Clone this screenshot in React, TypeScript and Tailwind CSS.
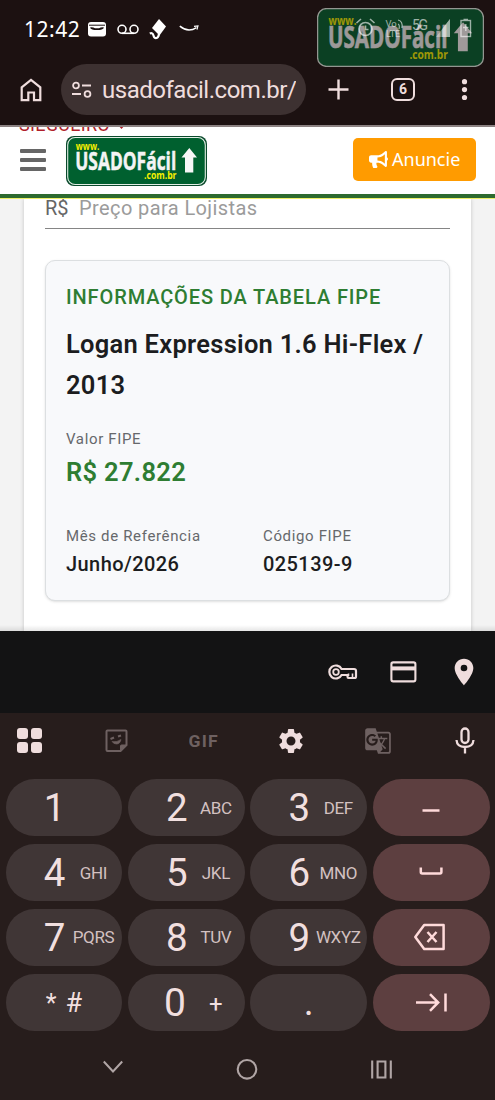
import type { ReactNode } from 'react';
import { FaBullhorn } from 'react-icons/fa';
import { MdSettings, MdLocationOn, MdGTranslate } from 'react-icons/md';

function Logo({ className, flat = false }: { className: string; flat?: boolean }) {
  return (
    <svg viewBox="0 0 141 50" preserveAspectRatio="none" className={className}>
      {!flat && <rect x="0" y="0" width="141" height="50" rx="8" fill="#0a4a2c" />}
      <rect x={flat ? 0.5 : 1.7} y={flat ? 0.5 : 1.5} width={flat ? 140 : 137.6} height={flat ? 49 : 47} rx="7.5" fill="#00602f" stroke="#e3efe6" strokeWidth="1.1" />
      <g fontFamily='"Open Sans", "Noto Sans", sans-serif' fontWeight="700">
        <text x="9.8" y="14" fontSize="11" fill="#f6f000" textLength="23.5" lengthAdjust="spacingAndGlyphs">www.</text>
        <text x="9.2" y="33.9" fontSize="25" fill="#f4f4f4" stroke="#f4f4f4" strokeWidth="0.5" textLength="101" lengthAdjust="spacingAndGlyphs">USADOFácil</text>
        <text x="78" y="43.3" fontSize="11" fill="#f6f000" textLength="32.5" lengthAdjust="spacingAndGlyphs">.com.br</text>
      </g>
      <path d="M123.3 12 131 21.5H127.3V36.6H119V21.5H115.5Z" fill="#f6f6f6" />
    </svg>
  );
}

function StatusBar() {
  return (
    <div className="relative flex h-[60px] items-center pb-[2px] pl-[24px] text-white">
      <span className="w-[62px] font-['Noto_Sans'] text-[21px] leading-[30px] tracking-[0.55px]">12:42</span>
      <svg className="ml-[2px] h-[15px] w-[18px]" viewBox="0 0 18 15">
        <rect width="18" height="14.5" rx="3" fill="#fff" />
        <path d="M1 3.2H17" stroke="#1c1111" strokeWidth="1" />
        <path d="M2 5.4Q5 5 7 6.2H11Q13 5 16 5.4Q15 8 9 8Q3 8 2 5.4Z" fill="#1c1111" />
      </svg>
      <svg className="ml-[10.5px] h-[11px] w-[22px]" viewBox="0 0 22 11" fill="none" stroke="#fff" strokeWidth="1.6">
        <circle cx="5" cy="5.3" r="4" />
        <circle cx="17" cy="5.3" r="4" />
        <path d="M5 9.3H17" />
      </svg>
      <svg className="ml-[10px] h-[21px] w-[18px]" viewBox="0 0 18 21">
        <path d="M10 0 17 7.5 10.5 16.5 3 9Z" fill="#fff" />
        <path d="M.8 14.6Q3.6 13.2 4.5 16.5Q5.2 19.6 7.6 19Q9.4 18.5 10 15" stroke="#fff" strokeWidth="2.2" fill="none" />
      </svg>
      <svg className="ml-[12px] h-[8px] w-[21px]" viewBox="0 0 21 8" fill="none" stroke="#fff">
        <path d="M.8 1.2Q9 8 17.5 2.6" strokeWidth="1.5" />
        <path d="M15 1.4 19 .9 18 4.6" strokeWidth="1.1" />
      </svg>
      <Logo flat className="absolute left-[317px] top-[8px] h-[59px] w-[167px] opacity-60" />
      <svg className="absolute left-[355px] top-[17px] h-[22px] w-[120px] opacity-60" viewBox="0 0 120 22" fill="none" stroke="#fff">
        <circle cx="10.5" cy="12" r="6.5" strokeWidth="1.7" />
        <path d="M10.5 8.5V12.5H13.5M1.5 6 6 2M15 2 19.5 6" strokeWidth="1.6" />
        <g fill="#fff" stroke="none" fontFamily="Roboto, sans-serif">
          <text x="30.5" y="10" fontSize="9.5">Vo</text>
          <text x="31" y="19.5" fontSize="9">LTE</text>
          <text x="57" y="12.5" fontSize="14" textLength="16">5G</text>
        </g>
        <path d="M43 3Q48 4 47 11M43 7Q45 8 44 12" strokeWidth="1.2" />
        <path d="M81 20 95 2V20Z" fill="#fff" stroke="none" opacity=".6" />
        <path d="M87 20V12.5L95 2V20Z" fill="#fff" stroke="none" />
        <rect x="106" y="3.5" width="9.5" height="16" strokeWidth="1.4" />
        <path d="M108.5 2.5H113M110.8 7V14M108 10.5H113.5" strokeWidth="1.4" />
      </svg>
    </div>
  );
}

function BrowserBar() {
  return (
    <div className="flex h-[65px] items-start pl-[20px] pt-[4px] text-[#efdddd]">
      <svg className="mt-[14px] h-[24px] w-[22px]" viewBox="0 0 22 24" fill="none" stroke="currentColor" strokeWidth="2.2">
        <path d="M1.7 9.3 11 1.8 20.3 9.3V22.2H14V14.5H8.3V22.2H1.7Z" />
      </svg>
      <div className="ml-[19px] flex h-[51px] w-[245px] items-center overflow-hidden rounded-full bg-[#3d3131] pl-[11px]">
        <svg className="h-[18px] w-[20px] shrink-0" viewBox="0 0 20 18" fill="none" stroke="currentColor" strokeWidth="1.8">
          <circle cx="4" cy="4.5" r="2.9" />
          <path d="M10 4.5H19M0 13H9" />
          <circle cx="15.5" cy="13" r="2.9" />
        </svg>
        <div className="ml-[10px] w-[194px] overflow-hidden whitespace-nowrap font-['Roboto'] text-[24px] leading-[36px] tracking-[-0.48px]">usadofacil.com.br/v</div>
      </div>
      <svg className="ml-[22px] mt-[15px] h-[21px] w-[21px]" viewBox="0 0 21 21" stroke="currentColor" strokeWidth="2.4">
        <path d="M10.5 .5V20.5M.5 10.5H20.5" />
      </svg>
      <div className="ml-[42px] mt-[14px] flex h-[23px] w-[24px] items-center justify-center rounded-[6px] border-[2px] border-current font-['Roboto'] text-[14px] font-bold">6</div>
      <svg className="ml-[38px] mt-[15px] h-[22px] w-[30px]" viewBox="0 0 30 22" fill="currentColor">
        <circle cx="11.5" cy="2.7" r="2.6" />
        <circle cx="11.5" cy="10.6" r="2.6" />
        <circle cx="11.5" cy="18.5" r="2.6" />
      </svg>
    </div>
  );
}

function SiteHeader() {
  return (
    <header className="relative flex h-[74px] items-start overflow-hidden border-t-2 border-[#8c8282] bg-white">
      <div className="absolute left-[19px] top-[-12px] flex items-center gap-[7px] font-['Roboto'] text-[18px] leading-[20px] tracking-[0.3px] text-[#b01f2b]">
        SIEGUEIRO
        <svg className="mt-[3px] h-[7px] w-[9px]" viewBox="0 0 9 7"><path d="M0 1H9L4.5 6Z" fill="currentColor" /></svg>
      </div>
      <div className="flex h-[67px] w-full">
        <div className="ml-[20px] mt-[22px] flex h-[22px] w-[26px] flex-col justify-between">
          <i className="h-[4px] rounded-[1px] bg-[#666]" />
          <i className="h-[4px] rounded-[1px] bg-[#666]" />
          <i className="h-[4px] rounded-[1px] bg-[#666]" />
        </div>
        <Logo className="ml-[20px] mt-[9px] h-[50px] w-[141px]" />
        <button className="ml-auto mr-[19px] mt-[11px] flex h-[43px] w-[123px] items-center rounded-[5px] bg-[#ff9b00] pl-[16px] font-['Noto_Sans'] text-[18px] text-white">
          <FaBullhorn className="mr-[4px] h-[17px] w-[19px]" />
          Anuncie
        </button>
      </div>
      <div className="absolute bottom-0 left-0 h-[5px] w-full border-b border-[#eef06a] bg-[#2d6a2f]" />
    </header>
  );
}

function FipeCard() {
  return (
    <section className="h-[341px] w-[405px] rounded-[10px] border border-[#dcdfe1] bg-[#f8f9fb] pl-[20px] pt-[21px] font-['Roboto'] text-[#1c1d1f] shadow-sm">
      <h2 className="text-[20px] font-medium leading-[30px] tracking-[0.88px] text-[#2e7d32]">INFORMAÇÕES DA TABELA FIPE</h2>
      <h3 className="mt-[12px] text-[25.5px] font-semibold leading-[41px] tracking-[0.27px]">
        Logan Expression 1.6 Hi-Flex /<br />2013
      </h3>
      <p className="mt-[23px] text-[15px] leading-[20px] tracking-[0.65px] text-[#66686b]">Valor FIPE</p>
      <p className="mt-[3px] text-[25.5px] font-semibold leading-[40px] tracking-[0.32px] text-[#2e7d32]">R$ 27.822</p>
      <div className="mt-[34px] grid grid-cols-[197px_1fr]">
        {[['Mês de Referência', 'Junho/2026'], ['Código FIPE', '025139-9']].map(([label, value]) => (
          <div key={label}>
            <p className="text-[15px] leading-[20px] tracking-[0.65px] text-[#66686b]">{label}</p>
            <p className="mt-[3px] text-[20px] font-medium leading-[30px] tracking-[0.42px]">{value}</p>
          </div>
        ))}
      </div>
    </section>
  );
}

function Page() {
  return (
    <main className="relative flex h-[432px] justify-center overflow-hidden bg-[#f3f3f3]">
      <div className="h-full w-[447px] bg-white px-[21px] shadow-[0_0_4px_rgba(0,0,0,0.2)]">
        <div className="flex h-[30px] items-start border-b border-[#858585] font-['Roboto'] text-[20px] leading-[18px]">
          <span className="w-[34px] text-[#666]">R$</span>
          <span className="tracking-[0.4px] text-[#9b9b9b]">Preço para Lojistas</span>
        </div>
        <div className="pt-[31px]"><FipeCard /></div>
      </div>
      <span className="pointer-events-none absolute left-[22px] top-[165px] font-['Liberation_Serif'] text-[32px] font-bold leading-[36px] tracking-[1px] text-black/[0.015]">usadofacil.com.br</span>
      <div className="absolute bottom-0 left-0 h-[6px] w-full bg-gradient-to-b from-transparent to-black/10" />
    </main>
  );
}

function AutofillBar() {
  return (
    <div className="flex h-[82px] items-center bg-[#131314] pl-[328px] text-[#efdddd]">
      <svg className="h-[18px] w-[30px]" viewBox="0 0 30 18" fill="none" stroke="currentColor" strokeWidth="2.2">
        <path d="M13.6 6H26Q28 6 28 8V13.5Q28 15 26.5 15H20.5Q19.5 15 19.5 13.5V12H13.6A6.5 6.5 0 1 1 13.6 6Z" />
        <circle cx="8" cy="9" r="2.8" strokeWidth="1.8" />
        <path d="M24.5 10.5V15M20.5 10.5V13" strokeWidth="1.6" />
      </svg>
      <svg className="ml-[32px] h-[22px] w-[27px]" viewBox="0 0 27 22" fill="none" stroke="currentColor" strokeWidth="2.1">
        <rect x="1.4" y="1.4" width="24" height="19" rx="1.8" />
        <path d="M1.4 7.4H25.4" strokeWidth="4" />
      </svg>
      <MdLocationOn className="ml-[31px] h-[32px] w-[32px]" />
    </div>
  );
}

function KeyboardTools() {
  return (
    <div className="flex h-[66px] items-start text-[#efdddd]">
      <svg className="ml-[17px] mt-[15px] h-[25px] w-[25px]" viewBox="0 0 25 25" fill="currentColor">
        <rect width="11" height="11" rx="3" />
        <rect x="14" width="11" height="11" rx="3" />
        <rect y="14" width="11" height="11" rx="3" />
        <rect x="14" y="14" width="11" height="11" rx="3" />
      </svg>
      <svg className="ml-[63px] mt-[16px] h-[24px] w-[23px] text-[#6e6161]" viewBox="0 0 23 24" fill="none" stroke="currentColor" strokeWidth="2">
        <path d="M2.5 1.5H20.5Q21.5 1.5 21.5 2.5V16L15.5 22H2.5Q1.5 22 1.5 21V2.5Q1.5 1.5 2.5 1.5Z" />
        <path d="M15.5 22V17Q15.5 16 16.5 16H21.5Z" fill="currentColor" strokeWidth="1" />
        <path d="M5.5 10 9 8.5M13 7.5 16 6.5" />
        <path d="M7 12.5Q12 13.5 16 10.5Q15 15 11.5 15Q8.5 15 7 12.5Z" fill="currentColor" strokeWidth=".6" />
      </svg>
      <svg className="ml-[61px] mt-[21px] h-[14px] w-[30px] text-[#6e6161]" viewBox="0 0 30 14">
        <text x="-0.5" y="13" fill="currentColor" fontFamily="Roboto, sans-serif" fontSize="17" fontWeight="700" letterSpacing="1.2" textLength="30.5" lengthAdjust="spacingAndGlyphs">GIF</text>
      </svg>
      <MdSettings className="ml-[57px] mt-[13px] h-[30px] w-[30px]" />
      <MdGTranslate className="ml-[58px] mt-[14px] h-[28px] w-[28px] text-[#6e6161]" />
      <svg className="ml-[63px] mt-[14px] h-[27px] w-[20px]" viewBox="0 0 20 27" fill="none" stroke="currentColor" strokeWidth="2.3">
        <rect x="6.5" y="1.5" width="7" height="14.5" rx="3.5" />
        <path d="M1.5 13Q2 20 10 20Q18 20 18.5 13M10 20V26.5" />
      </svg>
    </div>
  );
}

const actionIcons: Record<string, ReactNode> = {
  dash: <path d="M11.5 19.5H28.5" />,
  space: <path d="M9.8 14.5V19Q9.8 20.4 11.2 20.4H29Q30.4 20.4 30.4 19V14.5" />,
  delete: <path d="M13.2 8H32.6V32H13.2L4.3 20ZM16.5 15 25.5 25M25.5 15 16.5 25" strokeLinejoin="round" />,
  tab: <path d="M5 20.5H27M19 12.2 27.2 20.5 19 28.8M34.5 11.5V29.5" />,
};

function ActionKey({ name }: { name: string }) {
  return (
    <div className="flex items-center justify-center rounded-full bg-[#5d3f40] text-[#ffdada]">
      <svg aria-hidden className={name === 'dash' ? 'mt-[6px] h-[40px] w-[40px]' : 'h-[40px] w-[40px]'} viewBox="0 0 40 40" fill="none" stroke="currentColor" strokeWidth="2.5">{actionIcons[name]}</svg>
    </div>
  );
}

function NumberKey({ digit, letters }: { digit: string; letters?: string }) {
  return (
    <div className="flex items-center rounded-full bg-[#403636] pl-[33px] pt-[1px] font-['Roboto'] text-[#f1dfdf]">
      <span className="w-[32px] shrink-0 text-center text-[38.5px] leading-[56px]">{digit}</span>
      <span className="ml-[-2px] w-[50px] shrink-0 text-center text-[17px] leading-[55px] tracking-[-0.35px] text-[#d3c1c1]">{letters}</span>
    </div>
  );
}

function Keyboard() {
  return (
    <div className="grid h-[252px] grid-cols-4 grid-rows-4 gap-x-[5.5px] gap-y-[7.5px] px-[5.5px]">
      <NumberKey digit="1" />
      <NumberKey digit="2" letters="ABC" />
      <NumberKey digit="3" letters="DEF" />
      <ActionKey name="dash" />
      <NumberKey digit="4" letters="GHI" />
      <NumberKey digit="5" letters="JKL" />
      <NumberKey digit="6" letters="MNO" />
      <ActionKey name="space" />
      <NumberKey digit="7" letters="PQRS" />
      <NumberKey digit="8" letters="TUV" />
      <NumberKey digit="9" letters="WXYZ" />
      <ActionKey name="delete" />
      <div className="flex items-center justify-center gap-[9px] rounded-full bg-[#403636] pt-[2px] font-['Roboto'] text-[27px] text-[#f1dfdf]">
        <span className="text-[25px]">*</span><span>#</span>
      </div>
      <div className="flex items-center rounded-full bg-[#403636] pl-[31px] pt-[2px] font-['Roboto'] text-[#f1dfdf]">
        <span className="w-[32px] text-center text-[39px] leading-[55px]">0</span>
        <span className="ml-[10px] w-[30px] pt-[2px] text-center text-[24px]">+</span>
      </div>
      <div className="flex items-center justify-center rounded-full bg-[#403636] font-['Roboto'] text-[38px] leading-[57px] text-[#f1dfdf]">.</div>
      <ActionKey name="tab" />
    </div>
  );
}

function NavBar() {
  return (
    <div className="flex items-start pl-[103px] pt-[27px] text-[#b0a5a5]">
      <svg className="mt-[2px] h-[14px] w-[20px]" viewBox="0 0 20 14" fill="none" stroke="currentColor" strokeWidth="2">
        <path d="M.8 1.5 10 11.5 19.2 1.5" />
      </svg>
      <svg className="ml-[113px] h-[22px] w-[22px]" viewBox="0 0 22 22" fill="none" stroke="currentColor" strokeWidth="2.1">
        <circle cx="11" cy="11.3" r="9.3" />
      </svg>
      <svg className="ml-[113px] mt-[2px] h-[19px] w-[21px]" viewBox="0 0 21 19" fill="none" stroke="currentColor" strokeWidth="2.1">
        <path d="M1.2 .5V18.5M19.8 .5V18.5M6.6 1.5H14.4V17.5H6.6Z" />
      </svg>
    </div>
  );
}

export default function App() {
  return (
    <div className="flex h-[1100px] w-[495px] flex-col overflow-hidden bg-[#271d1c]">
      <div className="relative h-[125px] shrink-0 bg-[#1c1111]">
        <StatusBar />
        <BrowserBar />
      </div>
      <SiteHeader />
      <Page />
      <AutofillBar />
      <KeyboardTools />
      <Keyboard />
      <NavBar />
    </div>
  );
}
